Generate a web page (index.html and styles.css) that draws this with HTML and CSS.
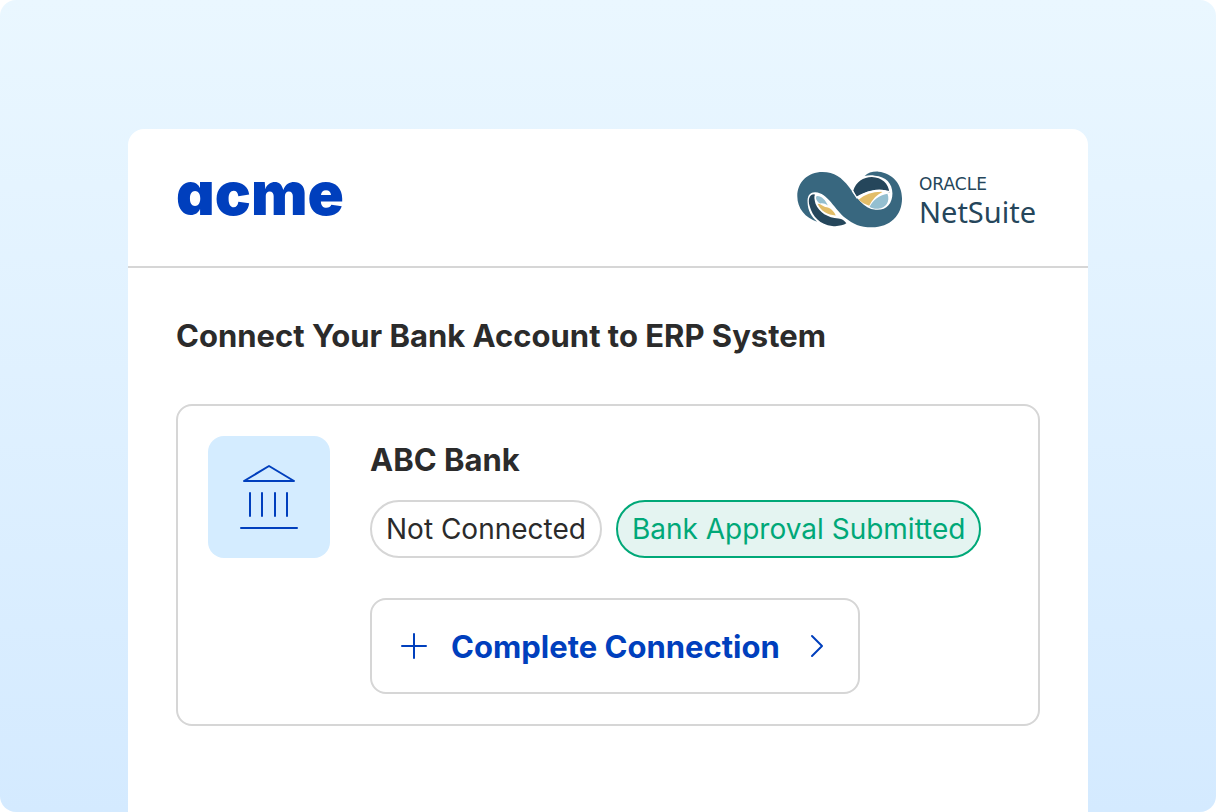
FILE: index.html
```html
<!DOCTYPE html>
<html lang="en">

<head>
    <meta charset="UTF-8">
    <meta name="viewport" content="width=device-width, initial-scale=1.0">
    <title>Connect Your Bank Account</title>
    <link rel="stylesheet" href="styles.css">
</head>

<body>
    <div class="page">
        <main class="panel">
            <header class="panel-header">
                <div class="acme">acme</div>
                <div class="netsuite">
                    <svg class="netsuite-mark" viewBox="22 20 318 172" aria-hidden="true">
                        <path fill="#38677f" d="M82 173C46 161 22 133 22 96C22 53 54 23 98 23C134 23 156 40 178 68C200 98 222 133 258 137C290 140 309 119 309 88C309 57 289 36 256 34C244 32 235 33 225 35C235 25 250 21 267 22C309 26 338 59 338 103C338 154 302 190 247 190C211 190 190 180 167 162C137 138 112 85 77 84C59 83 52 96 53 115C54 139 64 158 82 173Z" />
                        <path fill="#25465b" d="M73 90C57 91 54 107 59 125C68 159 91 182 127 186C145 188 160 184 170 178C164 169 158 164 146 163C115 162 87 145 77 119C74 107 72 99 75 92Z" />
                        <path fill="#94bfd0" d="M80 96C93 94 107 107 114 124C106 118 98 116 91 118C80 111 76 102 80 96Z" />
                        <path fill="#e2bd68" d="M83 119C93 119 97 125 106 129C121 130 131 140 138 154C113 153 94 142 83 119Z" />
                        <path fill="#25465b" d="M191 79C199 53 221 38 247 38C277 39 298 57 300 86C290 75 268 74 250 78C228 82 211 91 200 98Z" />
                        <path fill="#e2bd68" d="M207 107C226 91 251 82 279 83C261 92 249 105 239 125C226 121 216 115 207 107Z" />
                        <path fill="#94bfd0" d="M240 128C252 108 268 93 294 89C303 112 289 133 266 134C257 135 248 133 240 128Z" />
                        <path fill="none" stroke="#fff" stroke-width="4" d="M188 80L202 101C224 86 252 73 301 82" />
                    </svg>
                    <div class="netsuite-text">
                        <span class="oracle">ORACLE</span>
                        <span class="suite">NetSuite</span>
                    </div>
                </div>
            </header>

            <section class="content">
                <h1 class="title">Connect Your Bank Account to ERP System</h1>
                <div class="bank">
                    <div class="bank-icon">
                        <svg width="60" height="66" viewBox="0 0 60 66" fill="none" stroke="#003fbd" stroke-width="2" stroke-linecap="round" stroke-linejoin="round" aria-hidden="true">
                            <path d="M5 17L30 2L55 17ZM11 29V52M23 29V52M36 29V52M48 29V52M2 64H58" />
                        </svg>
                    </div>
                    <div class="bank-info">
                        <h2 class="bank-name">ABC Bank</h2>
                        <div class="tags">
                            <span class="tag">Not Connected</span>
                            <span class="tag tag-green">Bank Approval Submitted</span>
                        </div>
                        <button class="connect" type="button">
                            <svg width="26" height="26" viewBox="0 0 26 26" fill="none" stroke="currentColor" stroke-width="2" stroke-linecap="round" aria-hidden="true">
                                <path d="M13 1V25M1 13H25" />
                            </svg>
                            <span class="connect-label">Complete Connection</span>
                            <svg width="14" height="24" viewBox="0 0 14 24" fill="none" stroke="currentColor" stroke-width="2" stroke-linecap="round" stroke-linejoin="round" aria-hidden="true">
                                <path d="M2 2L12 12L2 22" />
                            </svg>
                        </button>
                    </div>
                </div>
            </section>
        </main>
    </div>
</body>

</html>
```

FILE: styles.css
```css
* {
    box-sizing: border-box;
}

body {
    margin: 0;
    background: #fff;
    color: #2b2b2b;
    font-family: Inter, "Liberation Sans", sans-serif;
}

.page {
    display: flex;
    min-height: 100vh;
    padding: 129px 128px 0;
    border-radius: 16px;
    background: linear-gradient(#eaf7ff, #d4eaff);
}

.panel {
    flex: 1;
    border-radius: 16px 16px 0 0;
    background: #fff;
}

.panel-header {
    display: flex;
    align-items: flex-start;
    justify-content: space-between;
    height: 139px;
    padding: 28px 52px 0 48px;
    border-bottom: 2px solid #d6d6d6;
}

.acme {
    color: #003fbd;
    font-size: 60px;
    font-weight: 900;
    line-height: 72px;
    font-feature-settings: "cv11";
}

.netsuite {
    display: flex;
    align-items: center;
    gap: 16px;
    padding-top: 14px;
    color: #25465b;
}

.netsuite-mark {
    width: 106px;
    height: 57px;
}

.netsuite-text {
    display: flex;
    flex-direction: column;
}

.oracle {
    font-family: "DejaVu Sans", sans-serif;
    font-size: 17px;
    line-height: 24px;
}

.suite {
    font-family: "Noto Sans", sans-serif;
    font-size: 29px;
    line-height: 32px;
}

.content {
    padding: 48px;
}

.title,
.bank-name {
    margin: 0;
    font-size: 31px;
    font-weight: 700;
    line-height: 40px;
}

.bank {
    display: flex;
    align-items: flex-start;
    gap: 40px;
    margin-top: 48px;
    padding: 30px;
    border: 2px solid #d6d6d6;
    border-radius: 16px;
}

.bank-icon {
    display: flex;
    flex: none;
    align-items: center;
    justify-content: center;
    width: 122px;
    height: 122px;
    border-radius: 16px;
    background: #d4ecff;
}

.bank-name {
    margin: 4px 0 20px;
}

.tags {
    display: flex;
    flex-wrap: wrap;
    gap: 14px;
}

.tag {
    padding: 10px 14px;
    border: 2px solid #d6d6d6;
    border-radius: 30px;
    font-size: 28px;
    line-height: 34px;
}

.tag-green {
    border-color: #00a878;
    background: #e4f4f1;
    color: #00a878;
}

.connect {
    display: flex;
    align-items: center;
    gap: 24px;
    height: 96px;
    margin-top: 40px;
    padding: 0 34px 0 29px;
    border: 2px solid #d6d6d6;
    border-radius: 16px;
    background: #fff;
    color: #003fbd;
    font-family: inherit;
    font-size: 31px;
    font-weight: 700;
}

.connect-label {
    margin-right: 6px;
}
```
